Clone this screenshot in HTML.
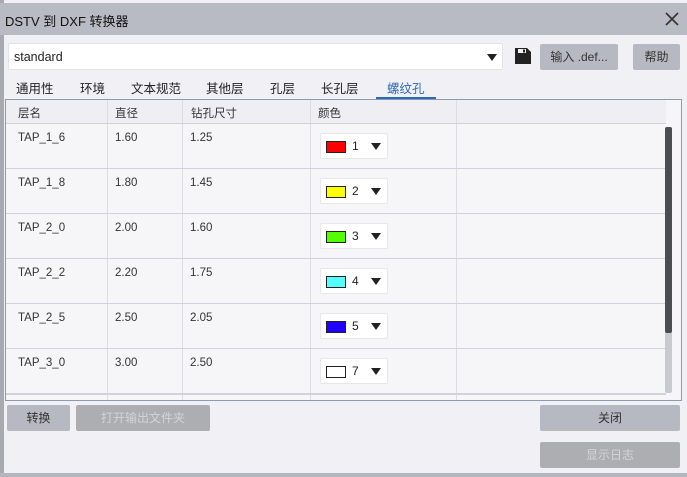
<!DOCTYPE html><html><head><meta charset="utf-8"><style>
*{box-sizing:border-box;margin:0;padding:0}
body{width:687px;height:477px;background:#b4b6bd;font-family:"Liberation Sans","Noto Sans CJK SC",sans-serif;font-size:12px;color:#222;position:relative;overflow:hidden}
.win{position:absolute;left:0;top:0;width:687px;height:473px;background:#f1f1f5;border-left:4px solid #a8aab2}
.title{position:absolute;left:0;top:3px;width:687px;height:32px;background:#b8bbc3}
.abs{position:absolute}
.btn{position:absolute;background:#b6b9c1;border-radius:2px;text-align:center;line-height:26px;font-size:12px;color:#333}
.dis{background:#adaeb2;color:#d3d4d8}
.tab{position:absolute;top:78px;font-size:12.5px;color:#222}
.grid{position:absolute;left:5px;top:99px;width:677px;height:302px;border:1px solid #8a9bb0;background:#f6f6f9;overflow:hidden}
.vl{position:absolute;top:0;width:1px;height:300px;background:#dcdce2}
.hl{position:absolute;left:0;width:660px;height:1px;background:#d2d3da}
.cell{position:absolute;font-size:11.5px;color:#333}
.cb{position:absolute;left:314px;width:68px;height:26px;background:#fff;border:1px solid #e8e8ec;border-radius:2px}
.sw{position:absolute;left:5px;top:7px;width:20px;height:12px;border:1px solid #222}
.num{position:absolute;left:31px;top:5px;font-size:12px}
.ar{position:absolute;left:50px;top:9px;width:0;height:0;border-left:5px solid transparent;border-right:5px solid transparent;border-top:7px solid #222}
</style></head><body>
<div class="win"></div>
<div class="title"><div class="abs" style="left:5px;top:8px;font-size:13px;color:#111">DSTV 到 DXF 转换器</div>
<svg class="abs" style="left:665px;top:9px" width="14" height="14"><path d="M1 1L13 13M13 1L1 13" stroke="#333" stroke-width="1.6"/></svg></div>
<div class="abs" style="left:8px;top:43px;width:495px;height:27px;background:#fff;border:1px solid #e2e2e8;border-radius:2px"><span class="abs" style="left:5px;top:6px;font-size:12.5px">standard</span><div class="abs" style="left:478px;top:10px;border-left:5px solid transparent;border-right:5px solid transparent;border-top:7px solid #222"></div></div>
<svg class="abs" style="left:515px;top:47px" width="16" height="17"><path d="M0 1h12l4 4v12H0z" fill="#222"/><rect x="3" y="2" width="8" height="4" fill="#f1f1f5"/><rect x="8" y="2.5" width="2" height="3" fill="#222"/></svg>
<div class="btn" style="left:540px;top:44px;width:78px">输入 .def...</div>
<div class="btn" style="left:633px;top:44px;width:47px">帮助</div>
<div class="tab" style="left:16px">通用性</div><div class="tab" style="left:80px">环境</div><div class="tab" style="left:131px">文本规范</div><div class="tab" style="left:206px">其他层</div><div class="tab" style="left:270px">孔层</div><div class="tab" style="left:321px">长孔层</div><div class="tab" style="left:387px;color:#2a6ab8">螺纹孔</div>
<div class="abs" style="left:376px;top:97px;width:60px;height:2px;background:#2a6ab8"></div>
<div class="grid">
<div class="abs" style="left:0;top:0;width:660px;height:23px;background:#efeff3"></div>
<div class="vl" style="left:101px"></div><div class="vl" style="left:176px"></div><div class="vl" style="left:304px"></div><div class="vl" style="left:450px"></div>
<div class="hl" style="top:23px"></div><div class="hl" style="top:68px"></div><div class="hl" style="top:113px"></div><div class="hl" style="top:158px"></div><div class="hl" style="top:203px"></div><div class="hl" style="top:248px"></div><div class="hl" style="top:293px;height:2px"></div>
<div class="cell" style="left:12px;top:5px">层名</div><div class="cell" style="left:109px;top:5px">直径</div><div class="cell" style="left:185px;top:5px">钻孔尺寸</div><div class="cell" style="left:312px;top:5px">颜色</div>
<div class="cell" style="left:12px;top:32px">TAP_1_6</div><div class="cell" style="left:109px;top:32px">1.60</div><div class="cell" style="left:184px;top:32px">1.25</div>
<div class="cell" style="left:12px;top:77px">TAP_1_8</div><div class="cell" style="left:109px;top:77px">1.80</div><div class="cell" style="left:184px;top:77px">1.45</div>
<div class="cell" style="left:12px;top:122px">TAP_2_0</div><div class="cell" style="left:109px;top:122px">2.00</div><div class="cell" style="left:184px;top:122px">1.60</div>
<div class="cell" style="left:12px;top:167px">TAP_2_2</div><div class="cell" style="left:109px;top:167px">2.20</div><div class="cell" style="left:184px;top:167px">1.75</div>
<div class="cell" style="left:12px;top:212px">TAP_2_5</div><div class="cell" style="left:109px;top:212px">2.50</div><div class="cell" style="left:184px;top:212px">2.05</div>
<div class="cell" style="left:12px;top:257px">TAP_3_0</div><div class="cell" style="left:109px;top:257px">3.00</div><div class="cell" style="left:184px;top:257px">2.50</div>
<div class="cb" style="top:33px"><div class="sw" style="background:#f00"></div><span class="num">1</span><div class="ar"></div></div>
<div class="cb" style="top:78px"><div class="sw" style="background:#ff0"></div><span class="num">2</span><div class="ar"></div></div>
<div class="cb" style="top:123px"><div class="sw" style="background:#5f0"></div><span class="num">3</span><div class="ar"></div></div>
<div class="cb" style="top:168px"><div class="sw" style="background:#5ff"></div><span class="num">4</span><div class="ar"></div></div>
<div class="cb" style="top:213px"><div class="sw" style="background:#20f"></div><span class="num">5</span><div class="ar"></div></div>
<div class="cb" style="top:258px"><div class="sw" style="background:#fff"></div><span class="num">7</span><div class="ar"></div></div>
<div class="abs" style="left:659px;top:27px;width:7px;height:266px;background:#c9cad0;border-radius:2px"></div>
<div class="abs" style="left:659px;top:27px;width:7px;height:206px;background:#4a4d52;border-radius:2px"></div>
</div>
<div class="btn" style="left:7px;top:405px;width:63px">转换</div>
<div class="btn dis" style="left:76px;top:405px;width:134px">打开输出文件夹</div>
<div class="btn" style="left:540px;top:405px;width:140px">关闭</div>
<div class="btn dis" style="left:540px;top:442px;width:140px">显示日志</div>
</body></html>
